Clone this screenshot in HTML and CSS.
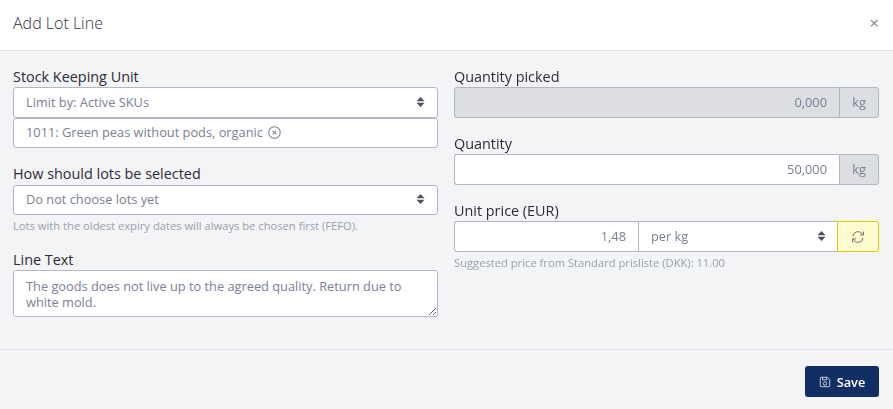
FILE: index.html
```html
<!DOCTYPE html>
<html lang="en">
<head>
<meta charset="utf-8">
<title>Add Lot Line</title>
<link rel="stylesheet" href="styles.css">
</head>
<body>
<div class="modal">
  <header class="head">
    <h1 class="title">Add Lot Line</h1>
    <span class="close">×</span>
  </header>
  <main class="body">
    <div class="col">
      <div class="group">
        <label class="label">Stock Keeping Unit</label>
        <div class="control select"><span>Limit by: Active SKUs</span><svg class="updown" viewBox="0 0 9 10"><path d="M4.5 0 8.5 4.3H.5zM4.5 10 .5 5.7h8z"/></svg></div>
        <div class="control tag"><span>1011: Green peas without pods, organic</span><svg class="xcircle" viewBox="0 0 14 14"><circle cx="7" cy="7" r="6.2"/><path d="M5 5l4 4M9 5l-4 4"/></svg></div>
      </div>
      <div class="group g2">
        <label class="label">How should lots be selected</label>
        <div class="control select"><span>Do not choose lots yet</span><svg class="updown" viewBox="0 0 9 10"><path d="M4.5 0 8.5 4.3H.5zM4.5 10 .5 5.7h8z"/></svg></div>
        <p class="hint">Lots with the oldest expiry dates will always be chosen first (FEFO).</p>
      </div>
      <div class="group">
        <label class="label">Line Text</label>
        <textarea class="area" rows="2">The goods does not live up to the agreed quality. Return due to white mold.</textarea>
      </div>
    </div>
    <div class="col">
      <div class="group">
        <label class="label">Quantity picked</label>
        <div class="row">
          <div class="control num disabled">0,000</div>
          <div class="addon">kg</div>
        </div>
      </div>
      <div class="group">
        <label class="label">Quantity</label>
        <div class="row">
          <div class="control num">50,000</div>
          <div class="addon">kg</div>
        </div>
      </div>
      <div class="group">
        <label class="label">Unit price (EUR)</label>
        <div class="row">
          <div class="control num price">1,48</div>
          <div class="control select per"><span>per kg</span><svg class="updown" viewBox="0 0 9 10"><path d="M4.5 0 8.5 4.3H.5zM4.5 10 .5 5.7h8z"/></svg></div>
          <div class="refresh"><svg viewBox="0 0 16 16"><path d="M2.2 7.2A5.8 5.8 0 0 1 12.4 3.9L14 5.6M14.2 1.8V5.8H10.4M13.8 8.8A5.8 5.8 0 0 1 3.6 12.1L2 10.4M1.8 14.2V10.2H5.6"/></svg></div>
        </div>
        <p class="hint">Suggested price from Standard prisliste (DKK): 11.00</p>
      </div>
    </div>
  </main>
  <footer class="foot">
    <button class="save"><svg viewBox="0 0 14 14"><path d="M1.5 2.5a1 1 0 0 1 1-1h7.3l2.7 2.7v7.3a1 1 0 0 1-1 1h-9a1 1 0 0 1-1-1zM4 1.5v3h5v-3M7 6.8a2 2 0 1 0 0 4 2 2 0 0 0 0-4z"/></svg>Save</button>
  </footer>
</div>
</body>
</html>
```
FILE: styles.css
```css
* { box-sizing: border-box; }
html, body { margin: 0; padding: 0; }
body {
  width: 893px;
  height: 409px;
  overflow: hidden;
  background: #f3f4f6;
  font-family: "Open Sans", sans-serif;
  font-size: 12.8px;
  color: #7a8194;
}
.modal { display: flex; flex-direction: column; height: 409px; }
.head {
  height: 51px;
  flex: none;
  background: #fff;
  border-bottom: 1px solid #e1e3e7;
  padding: 0 14px 5px 13px;
  display: flex;
  align-items: center;
  justify-content: space-between;
}
.title {
  margin: 0;
  font-size: 16px;
  font-weight: 300;
  color: #33323c;
}
.close { font-size: 17px; color: #80848e; line-height: 1; }
.body {
  flex: none;
  height: 299px;
  padding: 17px 14px 0 13px;
  display: grid;
  grid-template-columns: 425px 425px;
  column-gap: 16px;
  border-bottom: 1px solid #e1e3e7;
}
.group { margin-bottom: 17px; }
.g2 { margin-top: 17px; margin-bottom: 18px; }
.label {
  display: block;
  font-size: 14.4px;
  line-height: 17px;
  margin-bottom: 2px;
  color: #2f2b37;
}
.g2 .label { margin-bottom: 3px; }
.control {
  height: 31px;
  background: #fff;
  border: 1px solid #b3b6c4;
  border-radius: 3px;
  padding: 0 12px 2px;
  display: flex;
  align-items: center;
  justify-content: space-between;
}
.g2 .control { height: 30px; }
.tag { height: 30px; justify-content: flex-start; gap: 5px; }
.updown { width: 9px; height: 10px; fill: #4c5160; flex: none; }
.xcircle { width: 13px; height: 13px; fill: none; stroke: #7a8194; stroke-width: 1.1; }
.hint {
  margin: 4px 0 0;
  font-size: 11.2px;
  line-height: 14px;
  color: #9a9fae;
}
.area {
  display: block;
  width: 100%;
  height: 47px;
  border: 1px solid #b3b6c4;
  border-radius: 3px;
  padding: 7px 12px;
  font: inherit;
  line-height: 16px;
  color: #7a8194;
  background: #fff;
}
.row { display: flex; }
.num { flex: 1; justify-content: flex-end; border-radius: 3px 0 0 3px; border-right: 0; }
.disabled { background: #dcdee2; }
.addon {
  width: 40px;
  flex: none;
  height: 31px;
  background: #dcdee2;
  border: 1px solid #b3b6c4;
  border-radius: 0 3px 3px 0;
  padding-bottom: 2px;
  display: flex;
  align-items: center;
  justify-content: center;
}
.price { flex: none; width: 184px; }
.per { flex: 1; border-radius: 0; border-right: 0; padding-right: 11px; }
.refresh {
  width: 42px;
  flex: none;
  height: 31px;
  background: #fffccf;
  border: 1px solid #e0cb00;
  border-radius: 0 3px 3px 0;
  display: flex;
  align-items: center;
  justify-content: center;
}
.refresh svg { width: 14px; height: 14px; fill: none; stroke: #5d5f62; stroke-width: 1; }
.foot {
  flex: 1;
  display: flex;
  justify-content: flex-end;
  align-items: flex-start;
  padding: 16px 14px 0 0;
}
.save {
  width: 74px;
  height: 31px;
  background: #112f62;
  border: 0;
  border-radius: 3px;
  color: #fff;
  font: 600 12.8px "Open Sans", sans-serif;
  display: flex;
  align-items: center;
  justify-content: center;
  gap: 6px;
  padding: 0;
}
.save svg { width: 12px; height: 12px; fill: none; stroke: #dfe3ea; stroke-width: 1; }
```
